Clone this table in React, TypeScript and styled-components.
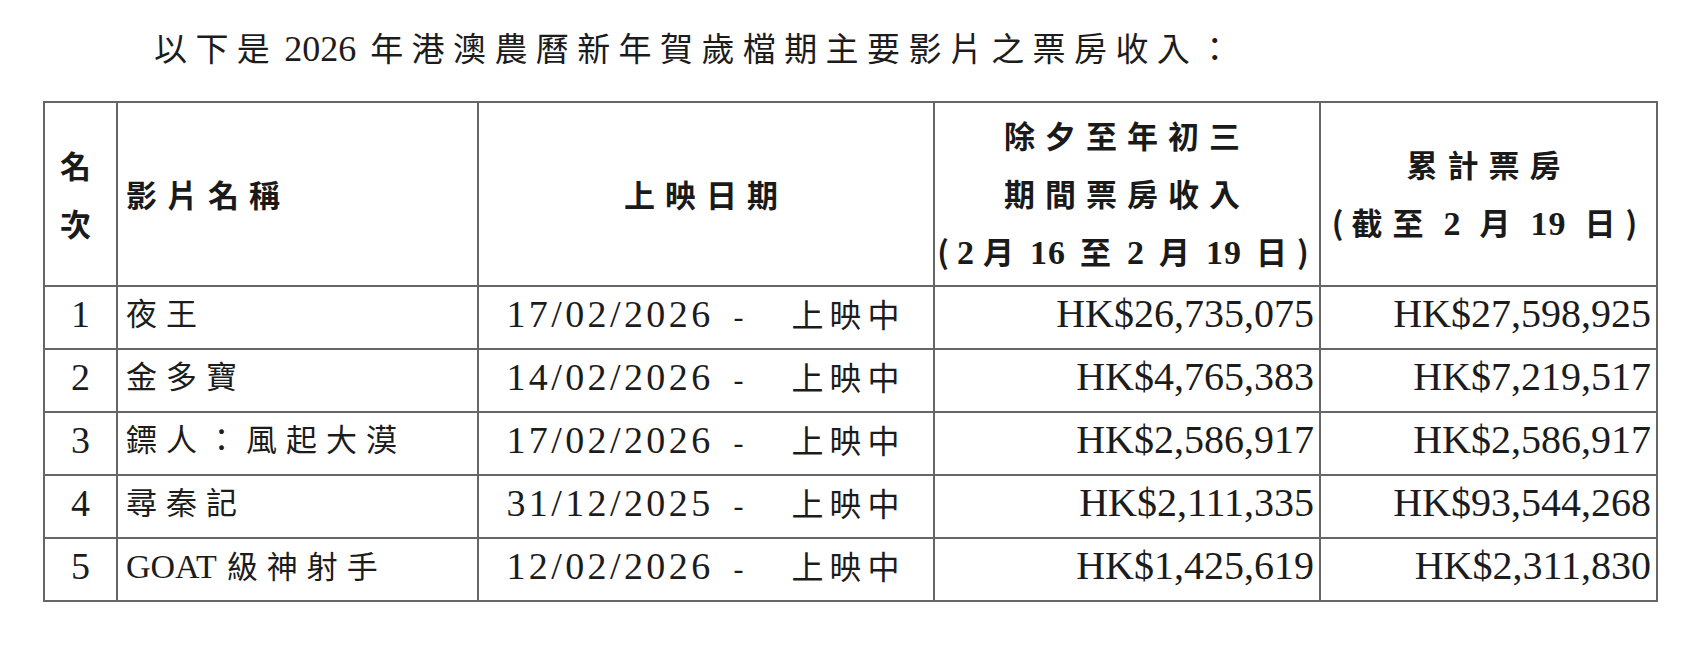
import React from 'react';
import styled, {createGlobalStyle} from 'styled-components';

const GlobalStyle = createGlobalStyle`
  html, body {
    margin: 0;
    padding: 0;
    background: #ffffff;
  }
  body {
    font-family: "Liberation Serif", "Noto Sans CJK TC", serif;
    color: #1c1c1c;
  }
`;

const Page = styled.div`
  width: 1693px;
  height: 649px;
  overflow: hidden;
  background: #fff;
`;

const Title = styled.p`
  margin: 0;
  padding: 29px 0 0 154px;
  height: 40px;
  line-height: 40px;
  font-size: 33px;
  letter-spacing: 8.4px;
  font-weight: 400;
  white-space: nowrap;
  font-family: "Liberation Serif", "Noto Sans CJK TC", serif;
`;

const TitleYear = styled.span`
  font-family: "Liberation Serif", serif;
  font-size: 36px;
  letter-spacing: 0;
  margin: 0 14px 0 6px;
`;

const Table = styled.table`
  margin: 32px 0 0 43px;
  width: 1613px;
  border-collapse: collapse;
  table-layout: fixed;
  border: 2px solid #666;
`;

const HeadRow = styled.tr`
  height: 184px;
`;

const Row = styled.tr`
  height: 63px;
`;

const HeadCell = styled.th<{ $align?: 'left' | 'center' }>`
  border: 2px solid #666;
  padding: ${p => (p.$align === 'left' ? '0 0 0 8px' : '0')};
  text-align: ${p => p.$align || 'center'};
  vertical-align: middle;
  font-family: "Noto Sans CJK TC", sans-serif;
  font-weight: 700;
  font-size: 31px;
  line-height: 58px;
  letter-spacing: 10px;
  white-space: nowrap;
  color: #1a1a1a;
`;

const Latin = styled.span<{ $gap?: number }>`
  font-family: "Liberation Serif", serif;
  font-weight: 700;
  font-size: 34px;
  letter-spacing: 1px;
  margin: 0 ${p => p.$gap ?? 8}px 0 ${p => (p.$gap ?? 8) - 8}px;
`;

const Paren = styled.span`
  font-weight: 700;
  letter-spacing: 8px;
`;

const Cell = styled.td<{ $align?: 'left' | 'center' | 'right' }>`
  border: 2px solid #666;
  padding: ${p => (p.$align === 'right' ? '0 5px 0 0' : p.$align === 'left' ? '0 0 0 8px' : '0')};
  text-align: ${p => p.$align || 'center'};
  vertical-align: middle;
  white-space: nowrap;
  line-height: 40px;
`;

const Rank = styled.span`
  font-family: "Liberation Serif", serif;
  font-size: 38px;
`;

const Name = styled.span`
  font-family: "Liberation Serif", "Noto Sans CJK TC", serif;
  font-size: 31px;
  letter-spacing: 9px;
`;

const NameLatin = styled.span`
  font-family: "Liberation Serif", serif;
  font-size: 34px;
  letter-spacing: 0;
  margin-right: 10px;
`;

const DateText = styled.span`
  font-family: "Liberation Serif", serif;
  font-size: 38px;
  letter-spacing: 3.4px;
`;

const Dash = styled.span`
  font-family: "Liberation Serif", serif;
  font-size: 30px;
  margin: 0 48px 0 20px;
`;

const Status = styled.span`
  font-family: "Noto Sans CJK TC", sans-serif;
  font-size: 32px;
  letter-spacing: 6px;
`;

const Money = styled.span`
  font-family: "Liberation Serif", serif;
  font-size: 40px;
  letter-spacing: 0;
`;

interface IFilm {
    rank: number;
    latin?: string;
    name: string;
    date: string;
    period: string;
    total: string;
}

const films: IFilm[] = [
    {rank: 1, name: '夜王', date: '17/02/2026', period: 'HK$26,735,075', total: 'HK$27,598,925'},
    {rank: 2, name: '金多寶', date: '14/02/2026', period: 'HK$4,765,383', total: 'HK$7,219,517'},
    {rank: 3, name: '鏢人：風起大漠', date: '17/02/2026', period: 'HK$2,586,917', total: 'HK$2,586,917'},
    {rank: 4, name: '尋秦記', date: '31/12/2025', period: 'HK$2,111,335', total: 'HK$93,544,268'},
    {rank: 5, latin: 'GOAT', name: '級神射手', date: '12/02/2026', period: 'HK$1,425,619', total: 'HK$2,311,830'},
];

export default function App() {
    return (
        <Page>
            <GlobalStyle/>
            <Title>以下是<TitleYear>2026</TitleYear>年港澳農曆新年賀歲檔期主要影片之票房收入：</Title>
            <Table>
                <colgroup>
                    <col style={{width: 73}}/>
                    <col style={{width: 361}}/>
                    <col style={{width: 456}}/>
                    <col style={{width: 386}}/>
                    <col style={{width: 337}}/>
                </colgroup>
                <thead>
                <HeadRow>
                    <HeadCell>名<br/>次</HeadCell>
                    <HeadCell $align="left">影片名稱</HeadCell>
                    <HeadCell>上映日期</HeadCell>
                    <HeadCell>
                        除夕至年初三<br/>
                        期間票房收入<br/>
                        <Paren>(</Paren><Latin>2</Latin>月<Latin $gap={14}>16</Latin>至<Latin $gap={14}>2</Latin>月<Latin
                        $gap={14}>19</Latin>日<Paren>)</Paren>
                    </HeadCell>
                    <HeadCell>
                        累計票房<br/>
                        <Paren>(</Paren>截至<Latin $gap={18}>2</Latin>月<Latin $gap={18}>19</Latin>日<Paren>)</Paren>
                    </HeadCell>
                </HeadRow>
                </thead>
                <tbody>
                {films.map(film => (
                    <Row key={film.rank}>
                        <Cell><Rank>{film.rank}</Rank></Cell>
                        <Cell $align="left">
                            {film.latin && <NameLatin>{film.latin}</NameLatin>}
                            <Name>{film.name}</Name>
                        </Cell>
                        <Cell>
                            <DateText>{film.date}</DateText>
                            <Dash>-</Dash>
                            <Status>上映中</Status>
                        </Cell>
                        <Cell $align="right"><Money>{film.period}</Money></Cell>
                        <Cell $align="right"><Money>{film.total}</Money></Cell>
                    </Row>
                ))}
                </tbody>
            </Table>
        </Page>
    );
}
